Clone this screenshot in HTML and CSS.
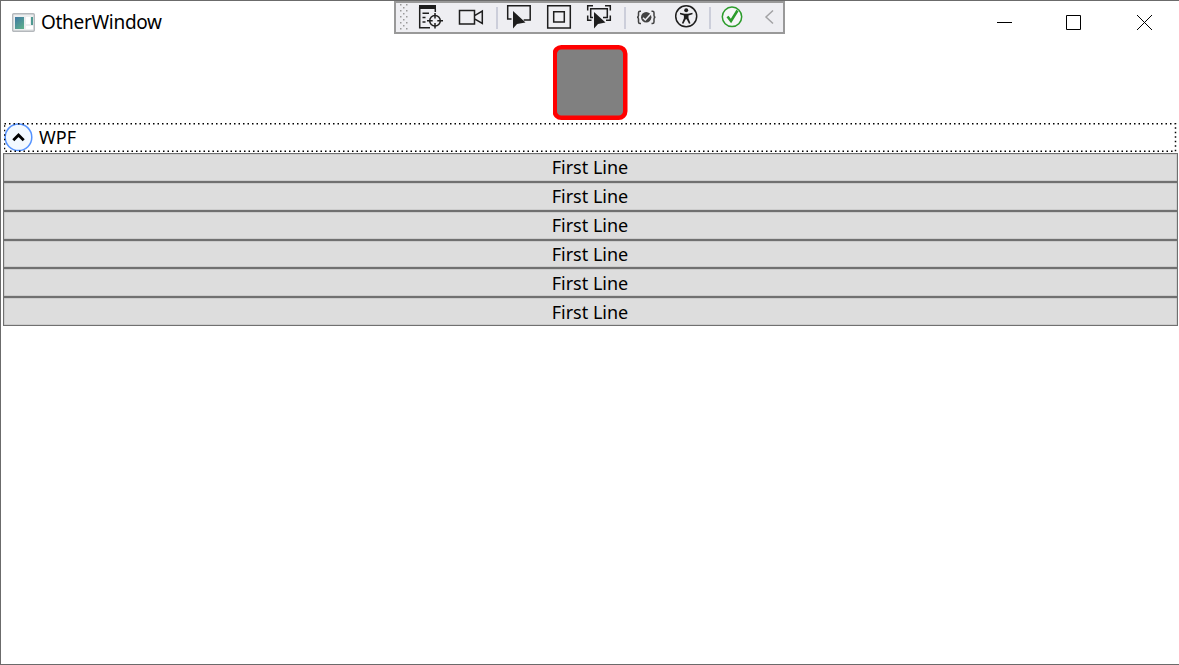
FILE: index.html
```html
<!DOCTYPE html>
<html lang="en">
<head>
    <meta charset="UTF-8">
    <meta name="viewport" content="width=device-width, initial-scale=1.0">
    <title>OtherWindow</title>
    <link rel="stylesheet" href="styles.css">
</head>
<body>
    <div class="window">
        <header class="titlebar">
            <svg class="app_icon" width="23" height="19" viewBox="0 0 23 19">
                <defs>
                    <linearGradient id="pane" gradientUnits="userSpaceOnUse" x1="3" y1="4" x2="14" y2="16">
                        <stop offset="0" stop-color="#3f78a4"/>
                        <stop offset="1" stop-color="#62b887"/>
                    </linearGradient>
                </defs>
                <rect x="0.7" y="0.7" width="21.6" height="17.6" rx="1" fill="#eceeef" stroke="#b4b8bc" stroke-width="1.4"/>
                <rect x="3" y="4" width="9" height="12" fill="url(#pane)"/>
                <rect x="14" y="4" width="4" height="7" fill="#fff"/>
                <rect x="19" y="4" width="2" height="8" fill="#4f9a92"/>
                <rect x="14" y="13" width="7" height="3" fill="#fff"/>
            </svg>
            <h1>OtherWindow</h1>
            <div class="controls">
                <svg width="70" height="42" viewBox="0 0 70 42"><path d="M28 21.5h15"/></svg>
                <svg width="70" height="42" viewBox="0 0 70 42"><path d="M27.500 14.500h14v14h-14z"/></svg>
                <svg width="70" height="42" viewBox="0 0 70 42"><path d="M28 14l15 15M43 14l-15 15"/></svg>
            </div>
        </header>

        <!-- debug toolbar -->
        <div class="toolbar">
            <svg class="grip" width="14" height="29" viewBox="0 0 14 29">
                <defs>
                    <pattern id="dots" width="6" height="6" patternUnits="userSpaceOnUse" x="4" y="1">
                        <rect width="1.5" height="1.5" fill="#999"/>
                        <rect x="3" y="3" width="1.5" height="1.5" fill="#999"/>
                    </pattern>
                </defs>
                <rect x="4" y="1" width="9" height="27" fill="url(#dots)"/>
            </svg>
            <svg width="40" height="29" viewBox="0 0 40 29">
                <path class="fill" d="M9 2h17v4H9z"/>
                <path d="M9.700 4v20.800H20M25.300 6v3M12.500 10.300H19M12.500 14.500h3M12.500 19h3"/>
                <circle cx="25" cy="17.700" r="5.300"/>
                <path d="M25 10v5.500M25 20v5.500M17 17.700h5.700M27.300 17.700H33"/>
            </svg>
            <svg width="40" height="29" viewBox="0 0 40 29">
                <path d="M9.500 7.500h15v13.500h-15zM25 12.300l7.300-4.300v12.500L25 16.200"/>
            </svg>
            <span class="sep" style="width:9px"></span>
            <svg width="40" height="29" viewBox="0 0 40 29">
                <path d="M12.500 16H8.700V2.700h22.500v14.200h-6.500"/>
                <path class="fill" d="M14 8v17.500l4-4.500 8.500-1.500z"/>
            </svg>
            <svg width="40" height="29" viewBox="0 0 40 29">
                <path d="M8.700 2.700h22.600V25H8.700zM14.700 8.700h10.600V19H14.700z"/>
            </svg>
            <svg width="40" height="29" viewBox="0 0 40 29">
                <path d="M8.700 7.500V2.700H14M26 2.700h5.300v4.800M31.300 12.500v4.800H27M12.500 17.300H8.700v-4.800"/>
                <path d="M14 14.500h-2.300V5.700h16.600v8.800H24"/>
                <path class="fill" d="M15 9v16.500l4-4.500 7.500-1.500z"/>
            </svg>
            <span class="sep last" style="width:7px"></span>
            <svg width="40" height="29" viewBox="0 0 40 29">
                <path class="brace" d="M15 8.200h-1q-1.500 0-1.500 1.500v2.800q0 1.700-1.500 1.700 1.500 0 1.500 1.700v3q0 1.500 1.500 1.500h1M25.500 8.200h1q1.500 0 1.500 1.500v2.800q0 1.700 1.500 1.700-1.500 0-1.500 1.700v3q0 1.500-1.500 1.500h-1"/>
                <circle class="badge" cx="20.200" cy="14.300" r="5.200"/>
                <path class="badge_check" d="M17 14.800l2.300 2.200 5.500-6"/>
            </svg>
            <svg width="40" height="29" viewBox="0 0 40 29">
                <circle cx="20.200" cy="13.300" r="10.500"/>
                <circle class="fill" cx="20.200" cy="7.300" r="2"/>
                <path class="fill" d="M14 9.800l4.500 1h3.500l4.500-1v1.500l-4 1.300v2.600l2 5-1.500.6-2.300-4.600h-1l-2.300 4.600-1.500-.6 2-5v-2.600l-3.900-1.300z"/>
            </svg>
            <span class="sep" style="width:6px"></span>
            <svg width="40" height="29" viewBox="0 0 40 29">
                <circle class="ok" cx="20" cy="13.800" r="9.700"/>
                <path class="ok_check" d="M15.500 13.500l3.500 4.500 6.500-10.500"/>
            </svg>
            <svg width="31" height="29" viewBox="0 0 31 29"><path class="arrow" d="M21 7.500l-7 6.500 7 6.500"/></svg>
        </div>

        <main class="contents">
            <svg class="box" width="76" height="75" viewBox="0 0 76 75">
                <rect x="1.750" y="2.250" width="70.500" height="70.500" rx="6.500"/>
            </svg>
            <div class="expander">
                <svg class="focus" width="1173" height="30">
                    <rect x="0.5" y="0.8" width="1171" height="27.500"/>
                </svg>
                <svg width="29" height="29" viewBox="0 0 29 29">
                    <circle class="ring" cx="14.500" cy="14.300" r="13.300"/>
                    <path class="chevron" d="M9.300 17.300l5.200-5.200 5.200 5.200"/>
                </svg>
                <span>WPF</span>
            </div>
            <ul class="list">
                <li><button>First Line</button></li>
                <li><button>First Line</button></li>
                <li><button>First Line</button></li>
                <li class="short"><button>First Line</button></li>
                <li class="low"><button>First Line</button></li>
                <li class="low"><button>First Line</button></li>
            </ul>
        </main>
    </div>
</body>
</html>
```
FILE: styles.css
```css
*{
    margin: 0;
    padding: 0;
    box-sizing: border-box;
}
ul,li{
    list-style: none;
}
body{
    overflow: hidden;
    font-family: "Noto Sans", "Open Sans", sans-serif;
    font-size: 18px;
    color: #000;
    background-color: #fff;
}
svg{
    display: block;
    flex: none;
}
.window{
    position: relative;
    width: 100%;
    height: 100vh;
    border: 1px solid #6b6b6b;
    border-right: 0;
}

/* title bar */
.titlebar{
    display: flex;
    align-items: center;
    height: 42px;
    padding-left: 11px;
}
.titlebar h1{
    margin-left: 6px;
    font-size: 19px;
    font-weight: 400;
    letter-spacing: -0.3px;
}
.controls{
    display: flex;
    margin-left: auto;
}
.controls path{
    fill: none;
    stroke: #000;
    stroke-width: 1;
}

/* toolbar */
.toolbar{
    position: absolute;
    top: 0;
    left: 393px;
    display: flex;
    width: 391px;
    height: 33px;
    border: 2px solid #999;
    background-color: #eeeef2;
}
.toolbar path,
.toolbar circle{
    fill: none;
    stroke: #1e1e1e;
    stroke-width: 1.5;
}
.toolbar .fill{
    fill: #1e1e1e;
    stroke: none;
}
.toolbar .brace{
    stroke: #424242;
}
.toolbar .badge{
    fill: #424242;
    stroke: none;
}
.toolbar .badge_check{
    stroke: #eeeef2;
}
.toolbar .ok{
    stroke: #2c9c2c;
    fill: #f6f6f8;
}
.toolbar .ok_check{
    stroke: #2c9c2c;
    stroke-width: 2.6;
}
.toolbar .arrow{
    stroke: #a2a2a4;
}
.sep{
    display: flex;
    flex: none;
    justify-content: flex-end;
    padding: 4px 1px 3px 0;
}
.sep.last{
    padding-right: 0;
}
.sep::after{
    content: "";
    width: 2px;
    background-color: #ccceda;
}

/* contents */
.contents{
    padding: 2px 1px 0 2px;
}
.box{
    margin: 0 auto;
}
.box rect{
    fill: #808080;
    stroke: #f00;
    stroke-width: 4.5;
}
.expander{
    position: relative;
    display: flex;
    align-items: flex-start;
    height: 30px;
    margin-top: 3px;
    padding-left: 1px;
}
.expander span{
    margin-left: 6px;
    line-height: 28px;
}
.focus{
    position: absolute;
    top: 0;
    left: 1px;
}
.focus rect{
    fill: none;
    stroke: #000;
    stroke-width: 1.5;
    stroke-dasharray: 1.5 3;
}
.ring{
    fill: #f3f9ff;
    stroke: #5593ff;
    stroke-width: 1.5;
}
.chevron{
    fill: none;
    stroke: #000;
    stroke-width: 2.8;
}
.list li{
    display: flex;
    height: 29px;
}
.list li.short{
    height: 28px;
}
.list button{
    flex: 1;
    padding: 0 1px 0 0;
    border: 1px solid #707070;
    box-shadow: inset 0 0 0 0.5px #bbb;
    background-color: #ddd;
    font: inherit;
    line-height: 25px;
}
.list .low button{
    line-height: 26px;
}
```
